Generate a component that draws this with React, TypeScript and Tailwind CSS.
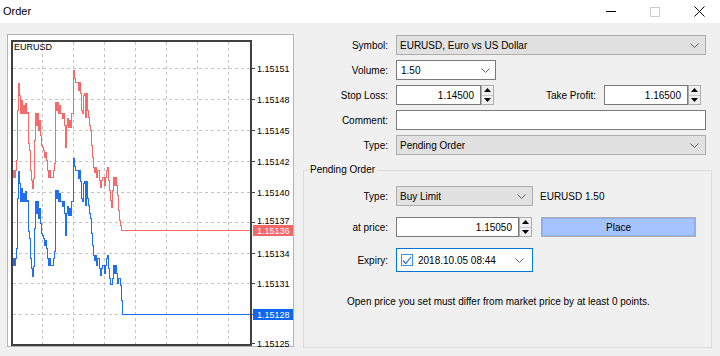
import React from 'react';

// ask line (red) traced from the tick chart; bid line is the same shape shifted down
const ask: [number, number][] = [
  [12, 133], [12, 177], [13, 170], [14, 177], [15, 170], [16, 160], [17, 110], [18, 83], [19, 95], [20, 113],
  [21, 100], [22, 113], [23, 105], [24, 113], [25, 103], [26, 113], [27, 112], [28, 143], [29, 150], [30, 170],
  [31, 180], [32, 188], [33, 178], [34, 140], [35, 113], [36, 125], [37, 113], [38, 130], [39, 120], [40, 135],
  [41, 145], [42, 147], [43, 150], [44, 157], [45, 152], [46, 160], [47, 170], [48, 177], [49, 170], [50, 177],
  [52, 177], [53, 170], [54, 163], [55, 102], [56, 110], [57, 102], [58, 113], [59, 105], [60, 113], [61, 113],
  [62, 118], [63, 113], [64, 125], [65, 147], [66, 125], [67, 118], [68, 127], [69, 120], [70, 127], [71, 113],
  [72, 113], [73, 70], [74, 78], [75, 82], [77, 82], [78, 90], [79, 82], [80, 93], [81, 110], [82, 113],
  [83, 95], [84, 93], [85, 117], [86, 93], [87, 110], [88, 117], [89, 125], [90, 130], [91, 145], [92, 157],
  [93, 167], [94, 172], [95, 167], [96, 177], [97, 170], [98, 170], [99, 180], [100, 187], [101, 180], [102, 177],
  [103, 177], [104, 185], [105, 177], [106, 170], [107, 167], [108, 180], [109, 190], [110, 200], [111, 207],
  [112, 190], [113, 177], [114, 185], [115, 177], [116, 185], [117, 195],
];

// draw as a stepped tick line: across, then up/down
const steps = (pts: number[][]) => {
  let d = `M${pts[0][0] + 0.5},${pts[0][1] + 0.5}`;
  for (let i = 1; i < pts.length; i++) {
    d += ` H${pts[i][0] + 0.5} V${pts[i][1] + 0.5}`;
  }
  return d;
};

const askPath = steps([...ask, [118, 210], [119, 220], [120, 225], [121, 230], [123, 230], [251, 230]]);

const bidPath = steps([
  ...ask.map(([x, y]) => [x, Math.min(y + 88, 284)]),
  [118, 278], [120, 285], [121, 300], [122, 314], [251, 314],
]);

const levels = [
  { y: 68, t: '1.15151' },
  { y: 99, t: '1.15148' },
  { y: 130, t: '1.15145' },
  { y: 161, t: '1.15142' },
  { y: 192, t: '1.15140' },
  { y: 222, t: '1.15137' },
  { y: 253, t: '1.15134' },
  { y: 283, t: '1.15131' },
  { y: 314, t: '1.15128' },
  { y: 343, t: '1.15125' },
];

const vlines = [42, 73, 104, 135, 166, 197, 228];

const chartFont = 'Liberation Sans, Arial, sans-serif';

function Chart() {
  return (
    <div className="w-[287px] h-[313px] shrink-0">
      <svg width={287} height={313} viewBox="7 34 287 313" className="block">
        <rect x={7.5} y={34.5} width={286} height={312} fill="#fff" stroke="#b4b4b4" />
        {levels.slice(0, 9).map((l) => (
          <line key={l.y} x1={13} x2={250} y1={l.y + 0.5} y2={l.y + 0.5} stroke="#c4c4c4" strokeDasharray="3,3" />
        ))}
        {vlines.map((x) => (
          <line key={x} x1={x + 0.5} x2={x + 0.5} y1={42} y2={344} stroke="#c4c4c4" strokeDasharray="3,3" />
        ))}
        <path d={askPath} fill="none" stroke="#f76a6a" strokeWidth={1} shapeRendering="crispEdges" />
        <path d={bidPath} fill="none" stroke="#1f6ff2" strokeWidth={1} shapeRendering="crispEdges" />
        <rect x={12} y={41} width={239} height={304} fill="none" stroke="#404040" strokeWidth={2} />
        {levels.map((l) => (
          <line key={'t' + l.y} x1={251} x2={255} y1={l.y + 0.5} y2={l.y + 0.5} stroke="#404040" />
        ))}
        <text x={14} y={50} fontSize={9} fill="#000" fontFamily={chartFont}>
          EURUSD
        </text>
        {levels.map((l) => (
          <text
            key={'l' + l.y}
            x={257}
            y={l.t === '1.15137' ? l.y + 2 : l.y + 3.5}
            fontSize={9}
            fill="#000"
            fontFamily={chartFont}
          >
            {l.t}
          </text>
        ))}
        <rect x={253} y={225} width={40} height={11} fill="#f26868" />
        <text x={257} y={233.5} fontSize={9} fill="#fff" fontFamily={chartFont}>
          1.15136
        </text>
        <rect x={253} y={309} width={40} height={11} fill="#0f66f0" />
        <text x={257} y={317.5} fontSize={9} fill="#fff" fontFamily={chartFont}>
          1.15128
        </text>
      </svg>
    </div>
  );
}

function Chevron() {
  return (
    <svg width="9" height="5" viewBox="0 0 9 5" className="shrink-0">
      <polyline points="0.5,0.5 4.5,4.5 8.5,0.5" fill="none" stroke="#606060" strokeWidth="1" />
    </svg>
  );
}

function Spin() {
  return (
    <div className="w-[13px] h-[20px] border border-[#adadad] bg-[#f0f0f0] flex flex-col shrink-0">
      <div className="flex-1 flex items-center justify-center border-b border-[#c8c8c8]">
        <svg width="7" height="4" viewBox="0 0 7 4">
          <polygon points="0,4 7,4 3.5,0" fill="#000" />
        </svg>
      </div>
      <div className="flex-1 flex items-center justify-center">
        <svg width="7" height="4" viewBox="0 0 7 4">
          <polygon points="0,0 7,0 3.5,4" fill="#000" />
        </svg>
      </div>
    </div>
  );
}

function Label({ children, w = 'w-[96px]' }: { children: React.ReactNode; w?: string }) {
  return <span className={`${w} shrink-0 pr-2 text-right`}>{children}</span>;
}

export default function App() {
  return (
    <div className="w-[720px] h-[356px] bg-[#f0f0f0] overflow-hidden text-[10px] text-black font-['Liberation_Sans',Arial,sans-serif]">
      {/* title bar */}
      <div className="h-[23px] bg-white flex items-center">
        <span className="pl-[3px] text-[11px]">Order</span>
        <div className="ml-auto flex items-center h-full">
          <div className="w-[10px] h-px bg-black mr-[34px]" />
          <div className="w-[10px] h-[10px] border border-[#cccccc] mr-[34px]" />
          <svg width="11" height="11" viewBox="0 0 11 11" className="mr-[15px]">
            <line x1="0.5" y1="0.5" x2="10.5" y2="10.5" stroke="#000" />
            <line x1="10.5" y1="0.5" x2="0.5" y2="10.5" stroke="#000" />
          </svg>
        </div>
      </div>

      <div className="flex pl-[7px] pt-[11px]">
        <Chart />

        <div className="ml-[6px] w-[412px] pt-px flex flex-col">
          <div className="flex flex-col gap-[5px]">
            <div className="flex items-center h-[20px]">
              <Label>Symbol:</Label>
              <div className="w-[310px] h-full border border-[#adadad] bg-[#e1e1e1] flex items-center pl-[3px] pr-[6px]">
                <span className="flex-1">EURUSD, Euro vs US Dollar</span>
                <Chevron />
              </div>
            </div>
            <div className="flex items-center h-[20px]">
              <Label>Volume:</Label>
              <div className="w-[100px] h-full border border-[#7a7a7a] bg-white flex items-center pl-[4px] pr-[5px]">
                <span className="flex-1">1.50</span>
                <Chevron />
              </div>
            </div>
            <div className="flex items-center h-[20px]">
              <Label>Stop Loss:</Label>
              <div className="w-[85px] h-full border border-[#7a7a7a] bg-white flex items-center justify-end pr-[6px]">
                1.14500
              </div>
              <Spin />
              <span className="w-[110px] shrink-0 pr-2 text-right">Take Profit:</span>
              <div className="w-[84px] h-full border border-[#7a7a7a] bg-white flex items-center justify-end pr-[6px]">
                1.16500
              </div>
              <Spin />
            </div>
            <div className="flex items-center h-[20px]">
              <Label>Comment:</Label>
              <div className="w-[310px] h-full border border-[#7a7a7a] bg-white" />
            </div>
            <div className="flex items-center h-[20px]">
              <Label>Type:</Label>
              <div className="w-[310px] h-full border border-[#adadad] bg-[#e1e1e1] flex items-center pl-[3px] pr-[6px]">
                <span className="flex-1">Pending Order</span>
                <Chevron />
              </div>
            </div>
          </div>

          {/* Pending Order group */}
          <div className="relative mt-[15px] ml-[3px] w-[409px] h-[178px] border border-[#dcdcdc] pt-[15px]">
            <span className="absolute -top-[7px] left-[4px] bg-[#f0f0f0] px-[2px] leading-[12px]">Pending Order</span>
            <div className="flex flex-col gap-[11px]">
              <div className="flex items-center h-[20px]">
                <Label w="w-[92px]">Type:</Label>
                <div className="w-[137px] h-full border border-[#adadad] bg-[#e1e1e1] flex items-center pl-[3px] pr-[6px]">
                  <span className="flex-1">Buy Limit</span>
                  <Chevron />
                </div>
                <span className="ml-[7px]">EURUSD 1.50</span>
              </div>
              <div className="flex items-center h-[20px]">
                <Label w="w-[92px]">at price:</Label>
                <div className="w-[123px] h-full border border-[#7a7a7a] bg-white flex items-center justify-end pr-[6px]">
                  1.15050
                </div>
                <Spin />
                <div className="ml-[9px] w-[155px] h-full border border-[#adadad] bg-[#a5c3fc] shadow-[inset_0_0_0_1px_#8fb0f5] flex items-center justify-center">
                  Place
                </div>
              </div>
            </div>
            <div className="flex items-center h-[24px] mt-[11px]">
              <Label w="w-[92px]">Expiry:</Label>
              <div className="w-[137px] h-full border border-[#0078d7] bg-white flex items-center pl-[4px] pr-[8px]">
                <div className="w-[12px] h-[12px] border border-[#3c8ee0] flex items-center justify-center shrink-0">
                  <svg width="10" height="9" viewBox="0 0 10 9">
                    <polyline points="1,4.5 3.8,7.5 9,1" fill="none" stroke="#1e6fd0" strokeWidth="1.2" />
                  </svg>
                </div>
                <span className="ml-[5px] flex-1 whitespace-nowrap overflow-hidden">2018.10.05 08:44</span>
                <Chevron />
              </div>
            </div>
            <p className="mt-[24px] pl-[43px] leading-[12px]">
              Open price you set must differ from market price by at least 0 points.
            </p>
          </div>
        </div>
      </div>
    </div>
  );
}
